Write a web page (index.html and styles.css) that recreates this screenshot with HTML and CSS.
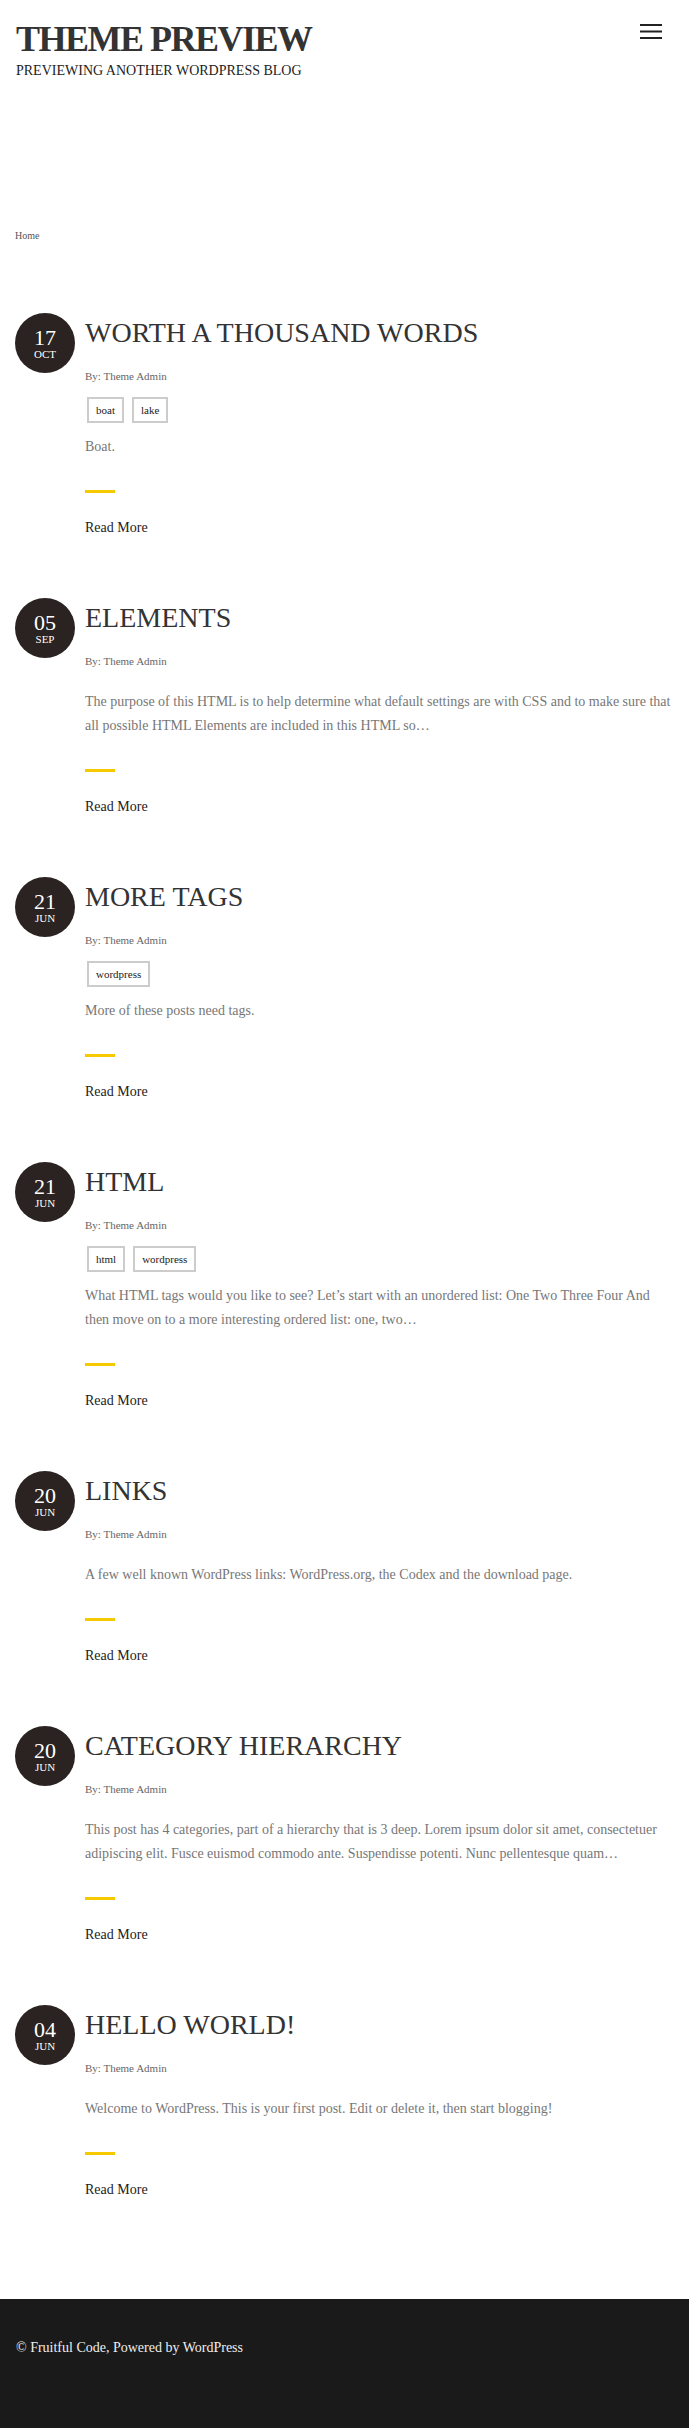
FILE: index.html
```html
<!DOCTYPE html>
<html lang="en">
<head>
    <meta charset="UTF-8">
    <meta name="viewport" content="width=device-width, initial-scale=1.0">
    <link rel="stylesheet" href="styles.css">
    <title>Theme Preview</title>
</head>
<body>
    <div class="header">
        <div class="brand">
            <a href="#" class="site-title">THEME PREVIEW</a>
            <p class="site-desc">PREVIEWING ANOTHER WORDPRESS BLOG</p>
        </div>
        <button class="menu-toggle" aria-label="Menu">
            <svg width="22" height="16" viewBox="0 0 22 16">
                <path d="M0 1h22M0 7.5h22M0 14h22" stroke="#222" stroke-width="2"/>
            </svg>
        </button>
    </div>

    <div class="breadcrumbs">
        <a href="#">Home</a>
    </div>

    <div class="main">
        <div class="post">
            <div class="date"><span class="day">17</span><span class="month">OCT</span></div>
            <div class="post-body">
                <h2 class="post-title">WORTH A THOUSAND WORDS</h2>
                <p class="meta">By: Theme Admin</p>
                <div class="tags">
                    <a href="#" class="tag">boat</a>
                    <a href="#" class="tag">lake</a>
                </div>
                <p class="excerpt">Boat.</p>
                <div class="bar"></div>
                <a href="#" class="read-more">Read More</a>
            </div>
        </div>

        <div class="post">
            <div class="date"><span class="day">05</span><span class="month">SEP</span></div>
            <div class="post-body">
                <h2 class="post-title">ELEMENTS</h2>
                <p class="meta">By: Theme Admin</p>
                <p class="excerpt">The purpose of this HTML is to help determine what default settings are with CSS and to make sure that all possible HTML Elements are included in this HTML so&hellip;</p>
                <div class="bar"></div>
                <a href="#" class="read-more">Read More</a>
            </div>
        </div>

        <div class="post">
            <div class="date"><span class="day">21</span><span class="month">JUN</span></div>
            <div class="post-body">
                <h2 class="post-title">MORE TAGS</h2>
                <p class="meta">By: Theme Admin</p>
                <div class="tags">
                    <a href="#" class="tag">wordpress</a>
                </div>
                <p class="excerpt">More of these posts need tags.</p>
                <div class="bar"></div>
                <a href="#" class="read-more">Read More</a>
            </div>
        </div>

        <div class="post">
            <div class="date"><span class="day">21</span><span class="month">JUN</span></div>
            <div class="post-body">
                <h2 class="post-title">HTML</h2>
                <p class="meta">By: Theme Admin</p>
                <div class="tags">
                    <a href="#" class="tag">html</a>
                    <a href="#" class="tag">wordpress</a>
                </div>
                <p class="excerpt">What HTML tags would you like to see? Let&rsquo;s start with an unordered list: One Two Three Four And then move on to a more interesting ordered list: one, two&hellip;</p>
                <div class="bar"></div>
                <a href="#" class="read-more">Read More</a>
            </div>
        </div>

        <div class="post">
            <div class="date"><span class="day">20</span><span class="month">JUN</span></div>
            <div class="post-body">
                <h2 class="post-title">LINKS</h2>
                <p class="meta">By: Theme Admin</p>
                <p class="excerpt">A few well known WordPress links: WordPress.org, the Codex and the download page.</p>
                <div class="bar"></div>
                <a href="#" class="read-more">Read More</a>
            </div>
        </div>

        <div class="post">
            <div class="date"><span class="day">20</span><span class="month">JUN</span></div>
            <div class="post-body">
                <h2 class="post-title">CATEGORY HIERARCHY</h2>
                <p class="meta">By: Theme Admin</p>
                <p class="excerpt">This post has 4 categories, part of a hierarchy that is 3 deep. Lorem ipsum dolor sit amet, consectetuer adipiscing elit. Fusce euismod commodo ante. Suspendisse potenti. Nunc pellentesque quam&hellip;</p>
                <div class="bar"></div>
                <a href="#" class="read-more">Read More</a>
            </div>
        </div>

        <div class="post">
            <div class="date"><span class="day">04</span><span class="month">JUN</span></div>
            <div class="post-body">
                <h2 class="post-title">HELLO WORLD!</h2>
                <p class="meta">By: Theme Admin</p>
                <p class="excerpt">Welcome to WordPress. This is your first post. Edit or delete it, then start blogging!</p>
                <div class="bar"></div>
                <a href="#" class="read-more">Read More</a>
            </div>
        </div>
    </div>

    <div class="footer">
        <p>&copy; Fruitful Code, Powered by WordPress</p>
    </div>
</body>
</html>
```

FILE: styles.css
```css
body{
    margin: 0;
    padding: 0;
    font-family: "Liberation Serif", "Times New Roman", serif;
    color: #333;
    background-color: #fff;
}
a{
    text-decoration: none;
}
.header{
    display: flex;
    justify-content: space-between;
    align-items: flex-start;
    padding: 21px 16px 147px;
}
.site-title{
    display: block;
    font-size: 36px;
    line-height: 36px;
    font-weight: bold;
    letter-spacing: -1.5px;
    color: #333;
}
.site-desc{
    margin: 4px 0 0;
    font-size: 14px;
    line-height: 20px;
    color: #222;
}
.menu-toggle{
    margin: 3px 11px 0 0;
    padding: 0;
    border: 0;
    background: none;
    line-height: 0;
    cursor: pointer;
}
.breadcrumbs{
    padding: 0 15px;
    font-size: 10px;
    line-height: 16px;
}
.breadcrumbs a{
    color: #555;
}
.main{
    padding: 69px 15px 39px;
}
.post{
    display: flex;
    gap: 10px;
    margin-bottom: 58px;
}
.date{
    flex: none;
    width: 60px;
    height: 60px;
    border-radius: 50%;
    background-color: #2a2321;
    color: #fff;
    display: flex;
    flex-direction: column;
    justify-content: center;
    align-items: center;
}
.day{
    font-size: 22px;
    line-height: 22px;
}
.month{
    font-size: 11px;
    line-height: 12px;
    margin-top: -1px;
}
.post-body{
    flex: 1;
    min-width: 0;
}
.post-title{
    margin: 0;
    font-size: 28px;
    line-height: 40px;
    font-weight: normal;
    color: #333;
}
.meta{
    margin: 13px 0 0;
    font-size: 11px;
    line-height: 20px;
    color: #666;
}
.tags{
    display: flex;
    gap: 8px;
    margin: 11px 0 -7px;
    padding-left: 2px;
}
.tag{
    border: 2px solid #ccc;
    padding: 0 7px;
    font-size: 11px;
    line-height: 22px;
    color: #222;
}
.excerpt{
    margin: 19px 0 31px;
    font-size: 14px;
    line-height: 24px;
    color: #777;
}
.bar{
    width: 30px;
    height: 3px;
    background-color: #f7ca00;
    margin-bottom: 23px;
}
.read-more{
    display: block;
    font-size: 14px;
    line-height: 24px;
    color: #222;
}
.footer{
    background-color: #1a1a1a;
    padding: 37px 16px 69px;
}
.footer p{
    margin: 0;
    font-size: 14px;
    line-height: 24px;
    color: #eee;
}
```
